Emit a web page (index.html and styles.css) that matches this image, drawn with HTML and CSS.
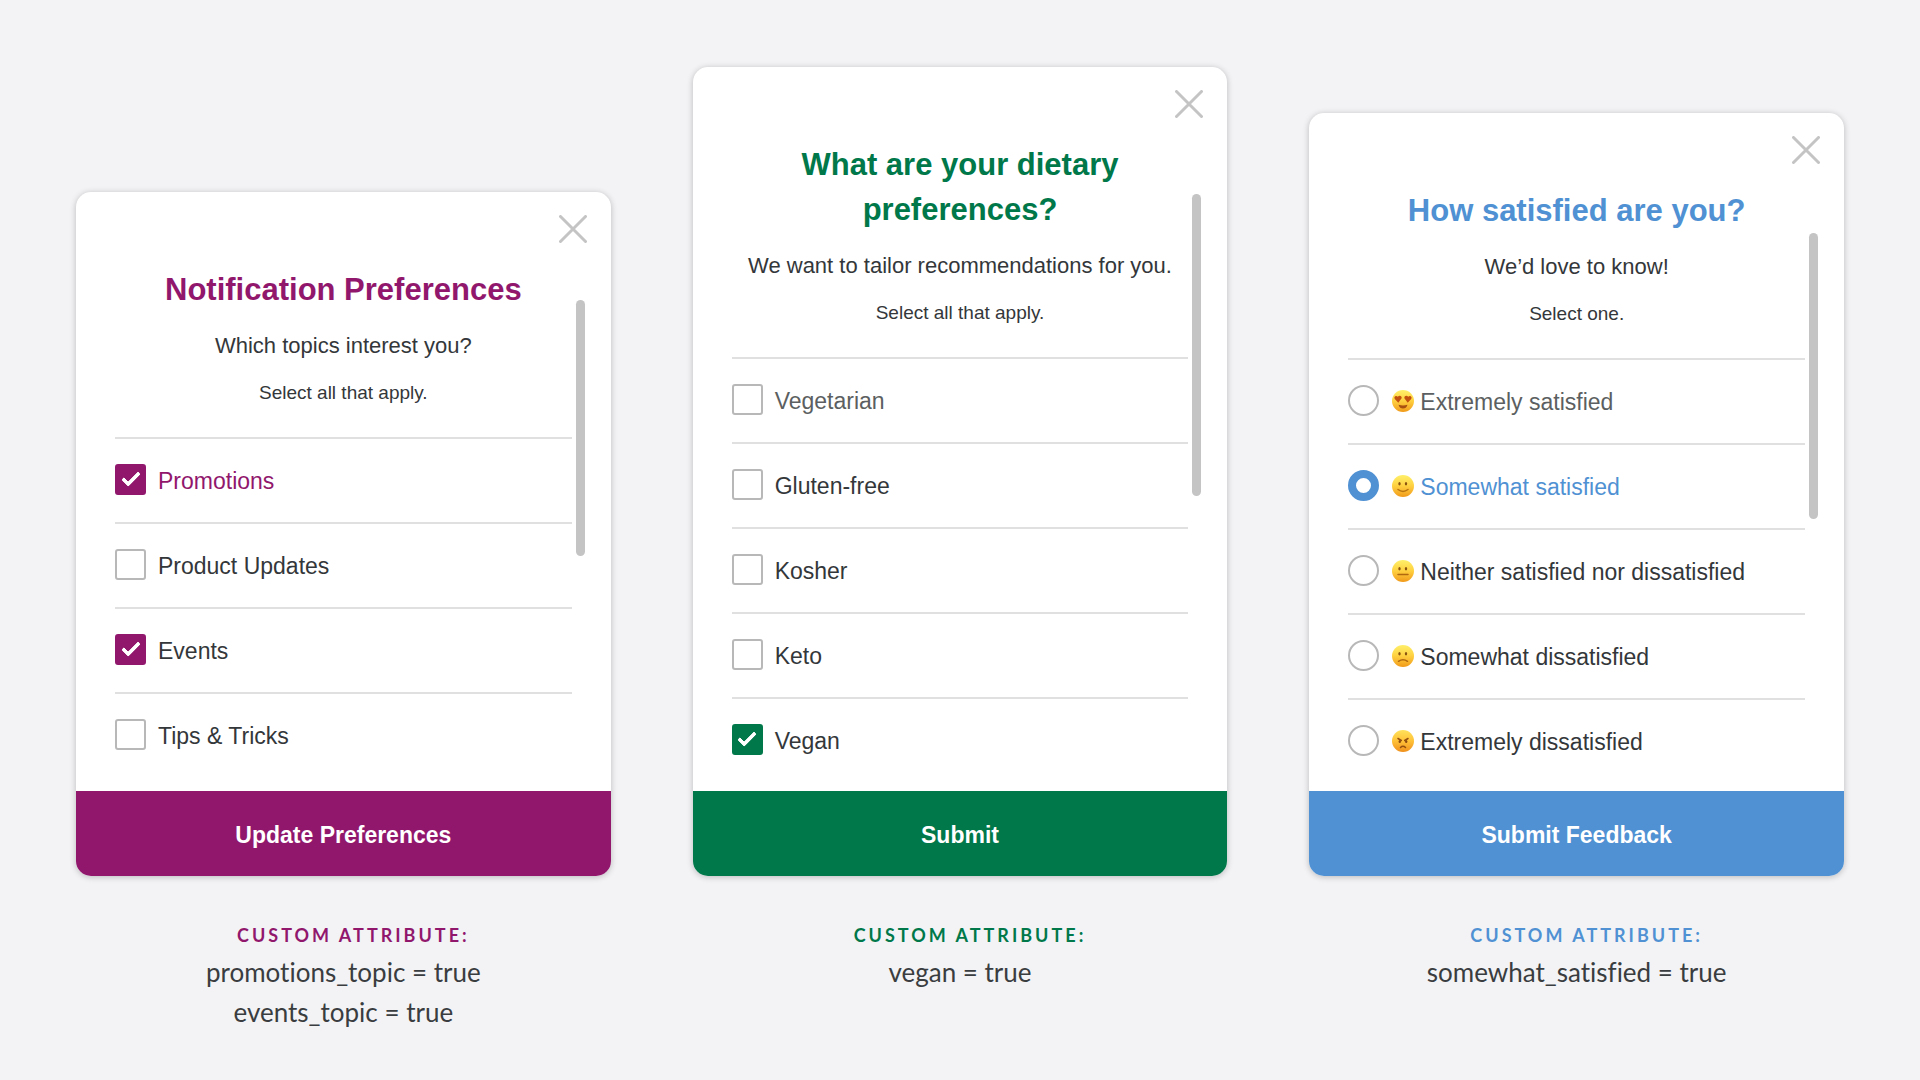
FILE: index.html
```html
<!DOCTYPE html>
<html lang="en">
<head>
<meta charset="utf-8">
<meta name="viewport" content="width=device-width, initial-scale=1">
<title>In-app message surveys</title>
<link rel="stylesheet" href="styles.css">
</head>
<body>
<svg class="defs" aria-hidden="true">
  <defs>
    <linearGradient id="skin" x1="0" y1="0" x2="0" y2="1">
      <stop offset="0" stop-color="#fff06a"/>
      <stop offset="0.5" stop-color="#ffd040"/>
      <stop offset="1" stop-color="#f09a1a"/>
    </linearGradient>
    <linearGradient id="skin-angry" x1="0" y1="0" x2="0" y2="1">
      <stop offset="0" stop-color="#ffe25c"/>
      <stop offset="0.5" stop-color="#ffc238"/>
      <stop offset="1" stop-color="#ef8f1c"/>
    </linearGradient>
    <symbol id="close" viewBox="0 0 28 28"><path d="M1.500 1.500 26.500 26.500M26.500 1.500 1.500 26.500" fill="none" stroke="#c4c4c4" stroke-width="3" stroke-linecap="round"/></symbol>
    <symbol id="love" viewBox="0 0 22 22"><circle cx="11" cy="11" r="11" fill="url(#skin)"/><path d="M6.300 12.800 2.800 9C1.400 7 3.800 5 5.800 6.800 7.400 4.800 10.200 6 9.600 8.300ZM15.700 12.800 19.200 9C20.600 7 18.200 5 16.200 6.800 14.600 4.800 11.800 6 12.400 8.300Z" fill="#c2500f"/><path d="M6.500 14.800Q11 16.200 15.500 14.800C14.800 17.600 13 18.600 11 18.600S7.200 17.600 6.500 14.800Z" fill="#a8500f"/></symbol>
    <symbol id="smile" viewBox="0 0 22 22"><circle cx="11" cy="11" r="11" fill="url(#skin)"/><ellipse cx="7.500" cy="8.800" rx="1.200" ry="1.700" fill="#8a5410"/><ellipse cx="14" cy="8.800" rx="1.200" ry="1.700" fill="#8a5410"/><path d="M6 14.500Q11 18.400 16 14.500" fill="none" stroke="#b8740f" stroke-width="1.500" stroke-linecap="round"/></symbol>
    <symbol id="neutral" viewBox="0 0 22 22"><circle cx="11" cy="11" r="11" fill="url(#skin)"/><ellipse cx="7.500" cy="8.800" rx="1.200" ry="1.700" fill="#8a5410"/><ellipse cx="14" cy="8.800" rx="1.200" ry="1.700" fill="#8a5410"/><path d="M6 14.500H16" fill="none" stroke="#b0690f" stroke-width="1.500" stroke-linecap="round"/></symbol>
    <symbol id="frown" viewBox="0 0 22 22"><circle cx="11" cy="11" r="11" fill="url(#skin)"/><ellipse cx="7.500" cy="8.800" rx="1.200" ry="1.700" fill="#8a5410"/><ellipse cx="14" cy="8.800" rx="1.200" ry="1.700" fill="#8a5410"/><path d="M6.500 16.300Q11 13.200 15.500 16.300" fill="none" stroke="#b0690f" stroke-width="1.500" stroke-linecap="round"/></symbol>
    <symbol id="angry" viewBox="0 0 22 22"><circle cx="11" cy="11" r="11" fill="url(#skin-angry)"/><ellipse cx="7.800" cy="11.500" rx="1.200" ry="1.600" fill="#8a4a10"/><ellipse cx="14.200" cy="11.500" rx="1.200" ry="1.600" fill="#8a4a10"/><path d="M6 8.500 9.300 10.500M16 8.500 12.700 10.500M8.500 17.500Q11 15 13.500 17.500" fill="none" stroke="#94500f" stroke-width="1.500" stroke-linecap="round"/></symbol>
  </defs>
</svg>

<main class="showcase">
  <section class="example example--purple">
    <form class="card">
      <button class="close" type="button" aria-label="Close"><svg class="close-icon"><use href="#close"/></svg></button>
      <span class="scrollbar"></span>
      <header class="intro">
        <h2 class="title">Notification Preferences</h2>
        <p class="question">Which topics interest you?</p>
        <p class="hint">Select all that apply.</p>
      </header>
      <ul class="options">
        <li class="option"><label class="choice choice--active"><input class="box" type="checkbox" checked><span class="name">Promotions</span></label></li>
        <li class="option"><label class="choice"><input class="box" type="checkbox"><span class="name">Product Updates</span></label></li>
        <li class="option"><label class="choice"><input class="box" type="checkbox" checked><span class="name">Events</span></label></li>
        <li class="option"><label class="choice"><input class="box" type="checkbox"><span class="name">Tips &amp; Tricks</span></label></li>
      </ul>
      <button class="submit" type="button">Update Preferences</button>
    </form>
    <div class="caption">
      <h3 class="caption-title">CUSTOM ATTRIBUTE:</h3>
      <p class="attribute">promotions_topic = true</p>
      <p class="attribute">events_topic = true</p>
    </div>
  </section>

  <section class="example example--green">
    <form class="card">
      <button class="close" type="button" aria-label="Close"><svg class="close-icon"><use href="#close"/></svg></button>
      <span class="scrollbar"></span>
      <header class="intro">
        <h2 class="title">What are your dietary preferences?</h2>
        <p class="question">We want to tailor recommendations for you.</p>
        <p class="hint">Select all that apply.</p>
      </header>
      <ul class="options">
        <li class="option"><label class="choice choice--muted"><input class="box" type="checkbox"><span class="name">Vegetarian</span></label></li>
        <li class="option"><label class="choice"><input class="box" type="checkbox"><span class="name">Gluten-free</span></label></li>
        <li class="option"><label class="choice"><input class="box" type="checkbox"><span class="name">Kosher</span></label></li>
        <li class="option"><label class="choice"><input class="box" type="checkbox"><span class="name">Keto</span></label></li>
        <li class="option"><label class="choice"><input class="box" type="checkbox" checked><span class="name">Vegan</span></label></li>
      </ul>
      <button class="submit" type="button">Submit</button>
    </form>
    <div class="caption">
      <h3 class="caption-title">CUSTOM ATTRIBUTE:</h3>
      <p class="attribute">vegan = true</p>
    </div>
  </section>

  <section class="example example--blue">
    <form class="card">
      <button class="close" type="button" aria-label="Close"><svg class="close-icon"><use href="#close"/></svg></button>
      <span class="scrollbar"></span>
      <header class="intro">
        <h2 class="title">How satisfied are you?</h2>
        <p class="question">We’d love to know!</p>
        <p class="hint">Select one.</p>
      </header>
      <ul class="options">
        <li class="option"><label class="choice choice--muted"><input class="radio" type="radio" name="satisfaction"><svg class="emoji"><use href="#love"/></svg><span class="name">Extremely satisfied</span></label></li>
        <li class="option"><label class="choice choice--active"><input class="radio" type="radio" name="satisfaction" checked><svg class="emoji"><use href="#smile"/></svg><span class="name">Somewhat satisfied</span></label></li>
        <li class="option"><label class="choice"><input class="radio" type="radio" name="satisfaction"><svg class="emoji"><use href="#neutral"/></svg><span class="name">Neither satisfied nor dissatisfied</span></label></li>
        <li class="option"><label class="choice"><input class="radio" type="radio" name="satisfaction"><svg class="emoji"><use href="#frown"/></svg><span class="name">Somewhat dissatisfied</span></label></li>
        <li class="option"><label class="choice"><input class="radio" type="radio" name="satisfaction"><svg class="emoji"><use href="#angry"/></svg><span class="name">Extremely dissatisfied</span></label></li>
      </ul>
      <button class="submit" type="button">Submit Feedback</button>
    </form>
    <div class="caption">
      <h3 class="caption-title">CUSTOM ATTRIBUTE:</h3>
      <p class="attribute">somewhat_satisfied = true</p>
    </div>
  </section>
</main>
</body>
</html>
```

FILE: styles.css
```css
*,
*::before,
*::after {
  box-sizing: border-box;
}

body {
  margin: 0;
  background: #f3f3f6;
  color: #34373a;
  font-family: "Liberation Sans", Arial, sans-serif;
}

h2,
h3,
p,
ul {
  margin: 0;
  padding: 0;
}

.defs {
  position: absolute;
  width: 0;
  height: 0;
}

/* Two shared rows: cards line up on their bottom edge, captions below */
.showcase {
  display: grid;
  grid-template-columns: repeat(3, minmax(0, 1fr));
  grid-template-rows: auto auto;
  column-gap: 82px;
  row-gap: 44px;
  padding: 67px 76px 36px;
}

.example {
  display: grid;
  grid-row: span 2;
  grid-template-rows: subgrid;
}

.example--purple {
  --accent: #91176d;
  --list-end: 14px;
  --bar-top: 108px;
  --bar-height: 256px;
}

.example--green {
  --accent: #00784a;
  --list-end: 9px;
  --bar-top: 127px;
  --bar-height: 302px;
}

.example--blue {
  --accent: #4f91d3;
  --list-end: 8px;
  --bar-top: 120px;
  --bar-height: 286px;
}

.card {
  position: relative;
  align-self: end;
  border-radius: 15px;
  background: #fff;
  box-shadow: 0 1px 6px rgba(0, 0, 0, 0.24);
}

.close {
  position: absolute;
  top: 23px;
  right: 24px;
  padding: 0;
  border: 0;
  background: none;
  line-height: 0;
  cursor: pointer;
}

.close-icon {
  width: 28px;
  height: 28px;
}

.scrollbar {
  position: absolute;
  top: var(--bar-top);
  right: 26px;
  width: 9px;
  height: var(--bar-height);
  border-radius: 5px;
  background: #c4c4c4;
}

.intro {
  padding: 75px 39px 32px;
  text-align: center;
}

.title {
  color: var(--accent);
  font-size: 31px;
  line-height: 45px;
}

.question {
  margin-top: 19px;
  font-size: 22px;
  line-height: 30px;
  white-space: nowrap;
}

.hint {
  margin-top: 20px;
  font-size: 19px;
  line-height: 24px;
}

.options {
  padding: 0 39px var(--list-end);
  list-style: none;
}

.option {
  border-top: 2px solid #e0e0e0;
}

.choice {
  display: flex;
  align-items: center;
  height: 83px;
  padding-bottom: 2px;
  font-size: 23px;
  line-height: 30px;
  cursor: pointer;
}

.choice--active {
  color: var(--accent);
}

.choice--muted {
  color: #5c5f61;
}

.name {
  padding-top: 2px;
}

.box,
.radio {
  flex: none;
  appearance: none;
  width: 31px;
  height: 31px;
  margin: 0 12px 0 0;
  border: 2px solid #b8b8b8;
  background: #fff;
}

.box {
  border-radius: 3px;
}

.box:checked {
  display: grid;
  place-items: center;
  border-color: var(--accent);
  background: var(--accent);
}

.box:checked::before {
  content: "";
  width: 18px;
  height: 10px;
  margin-top: -5px;
  border: solid #fff;
  border-width: 0 0 4px 4px;
  border-radius: 2px;
  transform: rotate(-45deg);
}

.radio {
  margin-right: 13px;
  border-radius: 50%;
}

.radio:checked {
  border: 8px solid var(--accent);
}

.emoji {
  flex: none;
  width: 22px;
  height: 22px;
  margin-right: 6px;
}

.submit {
  display: block;
  width: 100%;
  height: 85px;
  padding: 2px 0 0;
  border: 0;
  border-radius: 0 0 15px 15px;
  background: var(--accent);
  color: #fff;
  font: bold 23px/30px "Liberation Sans", Arial, sans-serif;
  cursor: pointer;
}

.caption {
  font-family: Lato, sans-serif;
  font-variant-ligatures: none;
  text-align: center;
}

.caption-title {
  margin-bottom: 2px;
  padding-left: 20px;
  color: var(--accent);
  font-size: 18px;
  font-weight: 700;
  line-height: 30px;
  letter-spacing: 3px;
}

.attribute {
  color: #3a3d40;
  font-size: 26px;
  line-height: 40px;
}
```
